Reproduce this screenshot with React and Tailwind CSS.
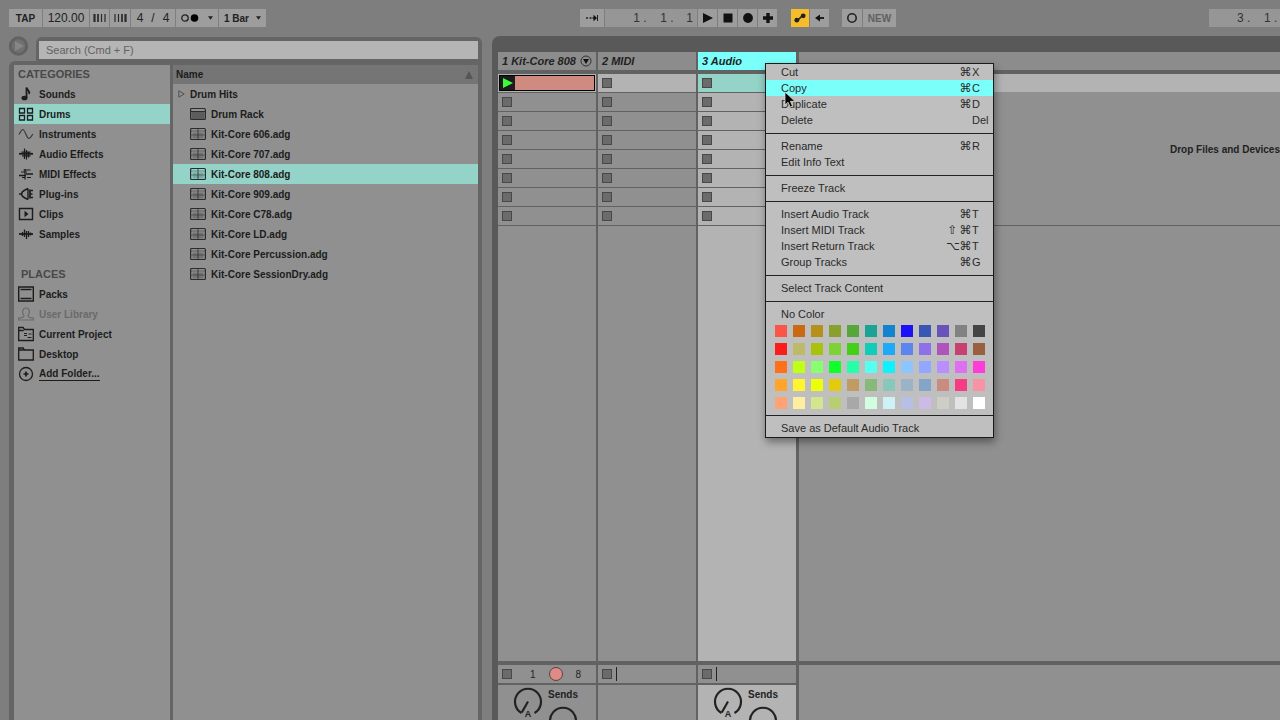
import React, { useState } from 'react'

const categories = [
  { name: 'Sounds', icon: 'note' },
  { name: 'Drums', icon: 'pads' },
  { name: 'Instruments', icon: 'wave' },
  { name: 'Audio Effects', icon: 'audio' },
  { name: 'MIDI Effects', icon: 'midi' },
  { name: 'Plug-ins', icon: 'plug' },
  { name: 'Clips', icon: 'clip' },
  { name: 'Samples', icon: 'sample' },
]

const places = [
  { name: 'Packs', icon: 'pack' },
  { name: 'User Library', icon: 'user', disabled: true },
  { name: 'Current Project', icon: 'project' },
  { name: 'Desktop', icon: 'folder' },
  { name: 'Add Folder...', icon: 'add', underline: true },
]

const presets = [
  'Kit-Core 606.adg',
  'Kit-Core 707.adg',
  'Kit-Core 808.adg',
  'Kit-Core 909.adg',
  'Kit-Core C78.adg',
  'Kit-Core LD.adg',
  'Kit-Core Percussion.adg',
  'Kit-Core SessionDry.adg',
]

const menuGroups = [
  [
    { label: 'Cut', mods: ['⌘'], letter: 'X' },
    { label: 'Copy', mods: ['⌘'], letter: 'C' },
    { label: 'Duplicate', mods: ['⌘'], letter: 'D' },
    { label: 'Delete', mods: [], letter: 'Del' },
  ],
  [
    { label: 'Rename', mods: ['⌘'], letter: 'R' },
    { label: 'Edit Info Text' },
  ],
  [{ label: 'Freeze Track' }],
  [
    { label: 'Insert Audio Track', mods: ['⌘'], letter: 'T' },
    { label: 'Insert MIDI Track', mods: ['⇧', '⌘'], letter: 'T' },
    { label: 'Insert Return Track', mods: ['⌥', '⌘'], letter: 'T' },
    { label: 'Group Tracks', mods: ['⌘'], letter: 'G' },
  ],
  [{ label: 'Select Track Content' }],
]

const palette = [
  ['#fa5546', '#c96a12', '#b4911a', '#8aa02e', '#57a63c', '#1ba396', '#1383cf', '#1c10f5', '#3a56b4', '#6a52bb', '#828282', '#444444'],
  ['#fb1c1c', '#bfba69', '#a9c20c', '#7fd138', '#45cf18', '#10ccb9', '#1eaaf8', '#5a86ee', '#8d70ea', '#ad55bd', '#c6416f', '#99603f'],
  ['#ff701a', '#c0ff16', '#88ff70', '#10ff2a', '#27ffa8', '#56fff0', '#0cf2ff', '#8cc5ff', '#92a7ff', '#b98eff', '#dd70f0', '#ff3cd8'],
  ['#ffa529', '#fff42f', '#ecff08', '#e2cb0c', '#be9c63', '#87b978', '#86c8ba', '#9bb3c6', '#84a5c8', '#ca8c7f', '#f83c84', '#f893a6'],
  ['#ffa374', '#ffeea0', '#d4e590', '#b9ce73', '#a8a8a8', '#d3fde1', '#cdf1f4', '#b8bfe6', '#cdbae5', '#cdcec6', '#e3e3e3', '#ffffff'],
]

const iconShapes = {
  note: (
    <>
      <ellipse cx="6.500" cy="12" rx="3" ry="2.300" fill="currentColor" stroke="none" />
      <path d="M8.500 12V1.500c.5 3 4 3 2.500 6.500" strokeWidth="1.800" />
    </>
  ),
  pads: <path d="M1.500 2.500h5v4.500h-5zM9.500 2.500h5v4.500h-5zM1.500 9.500h5v4.500h-5zM9.500 9.500h5v4.500h-5z" strokeWidth="1.300" />,
  wave: <path d="M1 8.500C2.500 6 3.500 3.500 4.800 3.500c2 0 4 9 6 9 1.500 0 2.500-2 4-4.500" opacity=".75" />,
  audio: (
    <>
      <path d="M1 7.800h14" strokeWidth="1.800" />
      <path d="M3.500 6.200h9M4 9.800h8.500M6.500 2.500v10.500M8.500 4v9.500M10.500 5.500v6" />
    </>
  ),
  midi: (
    <>
      <path d="M8 8h7M1 9.500h7" strokeWidth="1.600" />
      <path d="M3 6h6M5.500 4h7M9 11.500h4M4 11.500h3M7 3v10.500" />
    </>
  ),
  plug: (
    <>
      <path d="M1 8h2.500M10 2.500v11M10 2.500L7 4C2.500 6 2.500 10 7 12l3 1.500" strokeWidth="1.400" />
      <path d="M12 3.500v9M12 4.500h3M12 8h2.500M12 11.500h3" strokeWidth="1.700" />
    </>
  ),
  clip: (
    <>
      <path d="M1.500 2.500h13v11h-13z" strokeWidth="1.400" />
      <path d="M6.500 4.800L10.500 8l-4 3.200z" fill="currentColor" stroke="none" />
    </>
  ),
  sample: (
    <>
      <path d="M1 8h14" strokeWidth="1.800" />
      <path d="M4.500 6v4M6.500 3.500v7.500M8.500 5v8M10.500 5v6M12.500 6.500v3" strokeWidth="1.300" />
    </>
  ),
  pack: <path d="M.7 1h14.600v14H.7zM2.500 3.500h11M2.500 12.500h11" strokeWidth="1.400" />,
  user: <path d="M.5 14v-2C4 12 6 11 6 9.500 3.500 6.500 4.500 2 8 2s4.500 4.500 2 7.500c0 1.500 2 2.500 5.500 2.500v2z" />,
  project: (
    <>
      <path d="M.7 14.500v-13h4.500L6.500 3.500h8.800v11zM.7 4.500h5" strokeWidth="1.300" />
      <path d="M6 7.500h3M6 9.500h3M10.500 8h3M9.500 11.500h4" />
    </>
  ),
  folder: <path d="M.7 14v-12h4.500l1.300 2h8.800v10zM.7 4h5" strokeWidth="1.300" />,
  add: (
    <>
      <circle cx="8" cy="8" r="6.500" strokeWidth="1.300" />
      <path d="M8 5.500v5M5.500 8h5" strokeWidth="1.700" />
    </>
  ),
}

const Icon = ({ name }) => (
  <svg viewBox="0 0 16 16" className="w-4 h-4 shrink-0" fill="none" stroke="currentColor" strokeWidth="1.200">
    {iconShapes[name]}
  </svg>
)

const RackIcon = ({ plain }) => (
  <svg viewBox="0 0 16 14" className="w-4 h-[14px] shrink-0">
    {plain ? (
      <>
        <path d="M1.500 5h13v7h-13z" fill="#5c5c5c" />
        <path d="M1 4.500h14" stroke="#2c2c2c" />
      </>
    ) : (
      <>
        <path d="M2.500 5.500h11v6h-11z" fill="#000000" opacity=".2" />
        <path d="M1 4h14M1 8h14" stroke="#000000" strokeWidth=".8" opacity=".4" />
        <path d="M8 1.500v11" stroke="#2c2c2c" opacity=".8" />
      </>
    )}
    <rect x=".6" y="1.500" width="14.800" height="11" rx="1" fill="none" stroke="#2c2c2c" strokeWidth="1.200" />
  </svg>
)

const barButton = 'h-[18px] bg-[#9d9d9d] flex items-center justify-center'

const TopBar = () => (
  <header className="h-9 shrink-0 flex pt-[9px] pl-[9px] text-[10px] font-bold text-[#222222]">
    <div className="w-[571px] shrink-0 flex gap-px">
      <button className={`${barButton} w-[33px]`}>TAP</button>
      <button className={`${barButton} w-[46px] text-[12px] font-normal`}>120.00</button>
      <button className={`${barButton} w-[19px]`} aria-label="Nudge down">
        <svg viewBox="0 0 13 10" className="w-[13px] h-[10px]" stroke="#2a2a2a">
          <path d="M1.500 1v8" strokeWidth="2.200" />
          <path d="M5 1v8" strokeWidth="1.700" />
          <path d="M8.500 1v8M12 1v8" strokeWidth="1.200" />
        </svg>
      </button>
      <button className={`${barButton} w-[20px]`} aria-label="Nudge up">
        <svg viewBox="0 0 13 10" className="w-[13px] h-[10px]" stroke="#2a2a2a">
          <path d="M1 1v8M4.500 1v8" strokeWidth="1.200" />
          <path d="M8 1v8" strokeWidth="1.700" />
          <path d="M11.500 1v8" strokeWidth="2.200" />
        </svg>
      </button>
      <button className={`${barButton} w-[44px] gap-2 text-[12px] font-normal`}>
        <span>4</span>
        <span>/</span>
        <span>4</span>
      </button>
      <button className={`${barButton} w-[42px] gap-[9px]`} aria-label="Metronome">
        <svg viewBox="0 0 18 10" className="w-[18px] h-[10px]">
          <circle cx="4" cy="5" r="3.200" fill="none" stroke="#222222" strokeWidth="1.300" />
          <circle cx="13.500" cy="5" r="3.800" fill="#000000" />
        </svg>
        <svg viewBox="0 0 6 4" className="w-[5px] h-1">
          <path d="M0 0h6L3 4z" fill="#222222" />
        </svg>
      </button>
      <button className={`${barButton} w-[47px] gap-[7px]`}>
        <span>1 Bar</span>
        <svg viewBox="0 0 6 4" className="w-[5px] h-1">
          <path d="M0 0h6L3 4z" fill="#222222" />
        </svg>
      </button>
    </div>

    <div className="shrink-0 flex gap-px">
      <button className={`${barButton} w-[24px]`} aria-label="Follow">
        <svg viewBox="0 0 14 8" className="w-[14px] h-2">
          <path d="M1 4h2M4.500 4h2M7.500 4h3" stroke="#222222" strokeWidth="1.500" />
          <path d="M8.500 .8L12 4 8.500 7.200z" fill="#111111" />
          <path d="M12.500 1v6" stroke="#222222" />
        </svg>
      </button>
      <div className="h-[18px] w-[92px] bg-[#969696] flex items-center justify-end pr-[4px] text-[12px] font-normal text-[#333333]">
        <span className="w-[27px]">1 .</span>
        <span className="w-[26px]">1 .</span>
        <span>1</span>
      </div>
      <button className={`${barButton} w-[19px]`} aria-label="Play">
        <svg viewBox="0 0 10 10" className="w-[10px] h-[10px]"><path d="M0 0l10 5-10 5z" fill="#111111" /></svg>
      </button>
      <button className={`${barButton} w-[19px]`} aria-label="Stop">
        <svg viewBox="0 0 10 10" className="w-[10px] h-[10px]"><path d="M.5.5h9v9h-9z" fill="#111111" /></svg>
      </button>
      <button className={`${barButton} w-[19px]`} aria-label="Record">
        <svg viewBox="0 0 10 10" className="w-[10px] h-[10px]"><circle cx="5" cy="5" r="4.900" fill="#111111" /></svg>
      </button>
      <button className={`${barButton} w-[19px]`} aria-label="Overdub">
        <svg viewBox="0 0 10 10" className="w-[10px] h-[10px]"><path d="M5 0v10M0 5h10" stroke="#111111" strokeWidth="3.400" /></svg>
      </button>
      <button className="h-[18px] w-[18px] ml-[13px] bg-[#f5bd2c] flex items-center justify-center" aria-label="Automation arm">
        <svg viewBox="0 0 12 10" className="w-3 h-[10px]">
          <path d="M3 7c3 0 3-4 6-4" fill="none" stroke="#222222" strokeWidth="1.500" />
          <circle cx="2.800" cy="7.200" r="2.400" fill="#222222" />
          <circle cx="9.200" cy="2.800" r="2.400" fill="#222222" />
        </svg>
      </button>
      <button className={`${barButton} w-[19px]`} aria-label="Re-enable automation">
        <svg viewBox="0 0 10 8" className="w-[10px] h-2">
          <path d="M0 4l5-3.500v7z" fill="#111111" />
          <path d="M4 4h5" stroke="#111111" strokeWidth="1.800" />
        </svg>
      </button>
      <button className={`${barButton} w-[20px] ml-[12px]`} aria-label="Session record">
        <svg viewBox="0 0 10 10" className="w-[10px] h-[10px]"><circle cx="5" cy="5" r="4.200" fill="none" stroke="#222222" strokeWidth="1.600" /></svg>
      </button>
      <button className={`${barButton} w-[33px] text-[#606060]`}>NEW</button>
    </div>

    <div className="ml-auto w-[71px] h-[18px] bg-[#969696] flex items-center pl-[28px] text-[12px] font-normal text-[#333333]">
      <span className="w-[27px] shrink-0">3 .</span>
      <span className="shrink-0">1 .</span>
    </div>
  </header>
)

const PlaceRow = ({ item, selected, onSelect }) => (
  <button
    onClick={() => onSelect(item.name)}
    className={`h-5 w-full flex items-center gap-[5px] pl-[4px] text-left ${selected ? 'bg-[#93d3c8]' : ''} ${item.disabled ? 'text-[#6a6a6a]' : 'text-[#1c1c1c]'}`}
  >
    <Icon name={item.icon} />
    <span className={item.underline ? 'border-b border-[#1c1c1c] leading-[13px]' : ''}>{item.name}</span>
  </button>
)

const Browser = () => {
  const [category, setCategory] = useState('Drums')
  const [preset, setPreset] = useState('Kit-Core 808.adg')

  return (
    <section className="w-[473px] shrink-0 flex flex-col text-[10px] font-bold text-[#1c1c1c]">
      <div className="h-[25px] shrink-0 flex">
        <button className="w-[27px] h-5 shrink-0" aria-label="Preview">
          <svg viewBox="0 0 20 20" className="w-5 h-5">
            <circle cx="9.500" cy="10" r="8.200" fill="#707070" stroke="#626262" strokeWidth="3" />
            <path d="M6 5l9 5-9 5z" fill="#868686" />
          </svg>
        </button>
        <label className="flex-1 mt-[1px] pt-[4px] pl-[3px] pr-[4px] bg-[#656565] rounded-t-md">
          <input
            type="text"
            placeholder="Search (Cmd + F)"
            aria-label="Search"
            className="block w-full h-[18px] px-[7px] bg-[#b5b5b5] text-[11px] font-normal placeholder:text-[#626262] outline-none"
          />
        </label>
      </div>

      <div className="flex-1 min-h-0 flex gap-[3px] pt-[4px] pl-[5px] pr-[4px] bg-[#656565] rounded-tl-md">
        <nav className="w-[156px] shrink-0 bg-[#909090]">
          <h2 className="h-[19px] flex items-center pl-[4px] text-[11px] text-[#484848]">CATEGORIES</h2>
          {categories.map((item) => (
            <PlaceRow key={item.name} item={item} selected={item.name === category} onSelect={setCategory} />
          ))}
          <h2 className="h-5 mt-5 flex items-center pl-[7px] text-[11px] text-[#484848]">PLACES</h2>
          {places.map((item) => (
            <PlaceRow key={item.name} item={item} selected={item.name === category} onSelect={setCategory} />
          ))}
        </nav>

        <div className="flex-1 bg-[#909090]">
          <div className="h-[19px] flex items-center justify-between pl-[3px] pr-[5px] bg-[#757575]">
            <span>Name</span>
            <svg viewBox="0 0 8 8" className="w-2 h-2"><path d="M4 0l4 8H0z" fill="#555555" /></svg>
          </div>
          <button className="h-5 w-full flex items-center gap-[5px] pl-[5px]">
            <svg viewBox="0 0 7 8" className="w-[7px] h-2" fill="none" stroke="#505050"><path d="M.8.8L6.200 4 .8 7.200z" /></svg>
            Drum Hits
          </button>
          <button className="h-5 w-full flex items-center gap-[5px] pl-[17px]">
            <RackIcon plain />
            Drum Rack
          </button>
          {presets.map((name) => (
            <button
              key={name}
              onClick={() => setPreset(name)}
              className={`h-5 w-full flex items-center gap-[5px] pl-[17px] ${name === preset ? 'bg-[#93d3c8]' : ''}`}
            >
              <RackIcon />
              {name}
            </button>
          ))}
        </div>
      </div>
    </section>
  )
}

const StopSquare = () => <span className="w-[10px] h-[10px] bg-[#6b6b6b] border border-[#484848]" />

const Knob = ({ label }) => (
  <svg viewBox="0 0 32 32" className="w-8 h-8 shrink-0">
    <path d="M9.500 27A13 13 0 1 1 22.500 27" fill="none" stroke="#222222" strokeWidth="2.200" />
    <path d="M16 15.500L9.800 26.500" stroke="#222222" strokeWidth="2.200" />
    {label && (
      <text x="16" y="31" textAnchor="middle" fontSize="9" fontWeight="bold" fill="#222222">{label}</text>
    )}
  </svg>
)

const Sends = () => (
  <div className="flex pl-[14px] gap-[3px] text-[10px] leading-none font-bold text-[#222222]">
    <div className="pt-px">
      <Knob label="A" />
    </div>
    <div>
      <div className="h-5 flex items-center pl-px">Sends</div>
      <Knob />
    </div>
  </div>
)

const Track = ({ name, selected, hasMenu, clip, children, mixer }) => (
  <div className="w-[98px] shrink-0 flex flex-col text-[#222222]">
    <div className={`h-[18px] shrink-0 flex items-center justify-between px-[4px] text-[11px] leading-4 font-bold italic whitespace-nowrap ${selected ? 'bg-[#7afffb]' : 'bg-[#8c8c8c]'}`}>
      <span>{name}</span>
      {hasMenu && (
        <svg viewBox="0 0 12 12" className="w-3 h-3 shrink-0">
          <circle cx="6" cy="6" r="5" fill="none" stroke="#333333" />
          <path d="M3 4h6L6 9z" fill="#111111" />
        </svg>
      )}
    </div>
    <div className="mt-1 flex flex-col gap-px">
      {clip ? (
        <div className="h-[18px] bg-[#b3b3b3] pt-px px-px">
          <button className="w-full h-4 flex bg-[#cf8b80] border border-black" aria-label="Launch clip">
            <span className="w-[15px] h-full bg-[#1b1b1b] flex items-center justify-center">
              <svg viewBox="0 0 10 10" className="w-[10px] h-[10px]"><path d="M0 0l10 5-10 5z" fill="#3dfb3a" /></svg>
            </span>
          </button>
        </div>
      ) : (
        <button className={`h-[18px] flex items-center pl-[4px] ${selected ? 'bg-[#93d3c8]' : 'bg-[#b3b3b3]'}`} aria-label="Stop">
          <StopSquare />
        </button>
      )}
      {[2, 3, 4, 5, 6, 7, 8].map((slot) => (
        <button key={slot} className={`h-[18px] flex items-center pl-[4px] ${selected ? 'bg-[#b3b3b3]' : 'bg-[#909090]'}`} aria-label="Stop">
          <StopSquare />
        </button>
      ))}
    </div>
    <div className={`flex-1 mt-[1px] ${selected ? 'bg-[#b3b3b3]' : 'bg-[#909090]'}`} />
    <div className="h-[18px] mt-1 shrink-0 flex items-center pl-[4px] bg-[#909090] text-[10px]">
      <StopSquare />
      {children}
    </div>
    <div className={`h-[35px] mt-[2px] shrink-0 overflow-hidden ${selected ? 'bg-[#b3b3b3]' : 'bg-[#909090]'}`}>
      {mixer && <Sends />}
    </div>
  </div>
)

const Session = () => (
  <section className="flex-1 min-w-0 ml-[10px] flex flex-col pt-4 pl-[6px] bg-[#595959] rounded-tl-lg overflow-hidden">
    <div className="flex-1 min-h-0 flex gap-[2px] bg-[#626262]">
      <Track name="1 Kit-Core 808" hasMenu clip mixer>
        <span className="ml-[18px]">1</span>
        <span className="w-[14px] h-[14px] ml-[13px] rounded-full bg-[#dd8b84] border border-[#5c4040]" />
        <span className="ml-[13px]">8</span>
      </Track>
      <Track name="2 MIDI">
        <span className="w-px h-[14px] ml-[4px] bg-[#222222]" />
      </Track>
      <Track name="3 Audio" selected mixer>
        <span className="w-px h-[14px] ml-[4px] bg-[#222222]" />
      </Track>
      <div className="flex-1 min-w-0 ml-px flex flex-col">
        <div className="h-[18px] shrink-0 bg-[#8c8c8c]" />
        <div className="h-[18px] mt-1 shrink-0 bg-[#b3b3b3]" />
        <div className="h-[133px] shrink-0 flex items-center justify-end bg-[#909090] pb-[18px] text-[10px] font-bold text-[#222222] whitespace-nowrap">
          Drop Files and Devices
        </div>
        <div className="flex-1 mt-[1px] bg-[#909090]" />
        <div className="h-[55px] mt-1 shrink-0 bg-[#909090]" />
      </div>
    </div>
  </section>
)

const Separator = () => <div className="h-px mt-[5px] mb-[4px] bg-[#222222]" />

const ContextMenu = () => {
  const [active, setActive] = useState('Copy')

  return (
    <div role="menu" className="absolute left-[765px] top-[63px] w-[229px] bg-[#bfbfbf] border border-[#1a1a1a] pb-px shadow-[1px_4px_8px_rgba(0,0,0,0.4)] text-[11px] text-[#2a2a2a]">
      {menuGroups.map((group, i) => (
        <div key={i}>
          {group.map((item) => (
            <button
              key={item.label}
              role="menuitem"
              onMouseEnter={() => setActive(item.label)}
              className={`h-4 w-full flex items-center pl-[15px] ${item.label === active ? 'bg-[#7afffb]' : ''}`}
            >
              <span>{item.label}</span>
              {item.letter && (
                <span className="ml-auto flex items-center">
                  {item.mods.map((mod) => (
                    <span key={mod} className="w-[13px] font-['DejaVu_Sans'] text-[12px] leading-4">{mod}</span>
                  ))}
                  <span className="w-[21px] text-left">{item.letter}</span>
                </span>
              )}
            </button>
          ))}
          <Separator />
        </div>
      ))}
      <button role="menuitem" className="h-4 w-full flex items-center pl-[15px]">No Color</button>
      <div className="mt-[3px] mb-[6px] pl-[9px] flex flex-col gap-[6px]">
        {palette.map((row, i) => (
          <div key={i} className="flex gap-[6px]">
            {row.map((color) => (
              <button key={color} aria-label={color} className="w-3 h-3 shrink-0" style={{ backgroundColor: color }} />
            ))}
          </div>
        ))}
      </div>
      <div className="h-px mb-[4px] bg-[#222222]" />
      <button role="menuitem" className="h-4 w-full flex items-center pl-[15px]">Save as Default Audio Track</button>
    </div>
  )
}

const App = () => (
  <div className="relative h-screen overflow-hidden flex flex-col bg-[#7e7e7e] font-['Liberation_Sans',Arial,sans-serif]">
    <TopBar />
    <main className="flex-1 min-h-0 flex pl-[9px]">
      <Browser />
      <Session />
    </main>
    <ContextMenu />
    <svg viewBox="0 0 12 18" className="absolute left-[784px] top-[91px] w-3 h-[18px] pointer-events-none">
      <path d="M1 1v13l3-2.800L6.200 16l2.300-1-2.100-4.700H11z" fill="#000000" stroke="#d8d8d8" strokeWidth=".8" />
    </svg>
  </div>
)

export default App
